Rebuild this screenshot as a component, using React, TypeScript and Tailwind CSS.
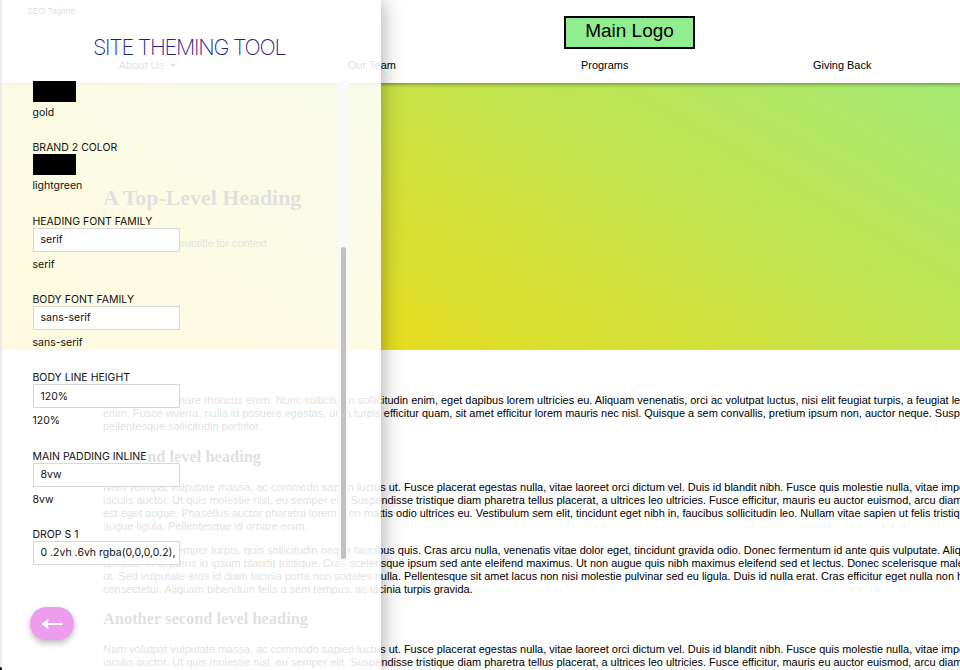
import type { ReactNode } from "react";

const introLines = [
  "Lorem ipsum ornare rhoncus enim. Nunc sollicitudin sollicitudin enim, eget dapibus lorem ultricies eu. Aliquam venenatis, orci ac volutpat luctus, nisi elit feugiat turpis, a feugiat leo",
  "enim. Fusce viverra, nulla id posuere egestas, urna turpis efficitur quam, sit amet efficitur lorem mauris nec nisl. Quisque a sem convallis, pretium ipsum non, auctor neque. Suspendisse",
  "pellentesque sollicitudin porttitor.",
];

const volutpatLines = [
  "Nam volutpat vulputate massa, ac commodo sapien luctus ut. Fusce placerat egestas nulla, vitae laoreet orci dictum vel. Duis id blandit nibh. Fusce quis molestie nulla, vitae imperdiet",
  "iaculis auctor. Ut quis molestie nisl, eu semper elit. Suspendisse tristique diam pharetra tellus placerat, a ultrices leo ultricies. Fusce efficitur, mauris eu auctor euismod, arcu diam",
  "est eget augue. Phasellus auctor pharetra lorem, non mattis odio ultrices eu. Vestibulum sem elit, tincidunt eget nibh in, faucibus sollicitudin leo. Nullam vitae sapien ut felis tristique",
  "augue ligula. Pellentesque id ornare enim.",
];

const semperLines = [
  "Vestibulum at semper turpis, quis sollicitudin neque faucibus quis. Cras arcu nulla, venenatis vitae dolor eget, tincidunt gravida odio. Donec fermentum id ante quis vulputate. Aliquam",
  "tempus. In ut purus in ipsum blandit tristique. Cras scelerisque ipsum sed ante eleifend maximus. Ut non augue quis nibh maximus eleifend sed et lectus. Donec scelerisque malesuada",
  "ut. Sed vulputate eros id diam lacinia porta non sodales nulla. Pellentesque sit amet lacus non nisi molestie pulvinar sed eu ligula. Duis id nulla erat. Cras efficitur eget nulla non hen",
  "consectetur. Aliquam bibendum felis a sem tempus, ac lacinia turpis gravida.",
];

function Paragraph({ lines }: { lines: string[] }) {
  return (
    <p className="whitespace-nowrap text-[10.94px] leading-[12.95px]">
      {lines.map((line) => (
        <span key={line} className="block">
          {line}
        </span>
      ))}
    </p>
  );
}

function SectionHeading({ children }: { children: ReactNode }) {
  return (
    <h2 className="font-['Liberation_Serif',serif] text-[16.4px] font-bold leading-[20px]">{children}</h2>
  );
}

function Field({ label, value, solid }: { label: string; value: string; solid?: boolean }) {
  return (
    <div className="h-[78.3px]">
      <label className={`block w-fit whitespace-nowrap text-[10.5px] leading-[13px] ${solid ? "bg-[#fefefe]" : ""}`}>
        {label}
      </label>
      <div className="flex h-[24px] w-[147.5px] items-center overflow-hidden whitespace-nowrap border border-[#d8d8d8] bg-white pl-[7px] text-[10.5px]">
        {value}
      </div>
      <div className="mt-[6px] text-[10.5px] leading-[13px]">{value}</div>
    </div>
  );
}

function Swatch({ name }: { name: string }) {
  return (
    <>
      <div className="h-[21px] w-[43px] bg-black" />
      <div className="mt-[4px] text-[10.5px] leading-[13px]">{name}</div>
    </>
  );
}

function Site() {
  return (
    <div className="flex h-[670px] w-[1286px] flex-col font-['Liberation_Sans',Arial,sans-serif] text-black">
      <header className="relative z-10 flex h-[82.5px] shrink-0 flex-col bg-[#fefefe] shadow-[0_1px_4px_rgba(0,0,0,0.45)]">
        <div className="flex h-[49px] items-start">
          <span className="ml-[27px] mt-[5px] w-[537px] text-[8.7px] leading-[12px]">SEO Tagline</span>
          <div className="mt-[16px] flex h-[33px] w-[131px] items-center justify-center border-2 border-black bg-[#90ee90] pb-[3px] text-[19px]">
            Main Logo
          </div>
        </div>
        <nav className="mt-[9px] flex pl-[119px] text-[10.94px] leading-[14px]">
          <span className="flex w-[229px] items-center gap-[6px]">
            About Us
            <span className="border-x-[3px] border-t-[3px] border-x-transparent border-t-black" />
          </span>
          <span className="w-[233px]">Our Team</span>
          <span className="w-[232px]">Programs</span>
          <span>Giving Back</span>
        </nav>
      </header>
      <section className="flex h-[267.5px] shrink-0 flex-col bg-[linear-gradient(30deg,#ffd700,#90ee90)] pl-[103px] pt-[102.5px]">
        <h1 className="font-['Liberation_Serif',serif] text-[21.9px] font-bold leading-[26px]">A Top-Level Heading</h1>
        <p className="mt-[26px] text-[10.94px] leading-[13px] tracking-[-0.06px]">And here is our subtitle for context</p>
      </section>
      <main className="grow bg-[#fefefe] pl-[103px] pt-[44px]">
        <Paragraph lines={introLines} />
        <div className="pb-[14px] pt-[14px]">
          <SectionHeading>A second level heading</SectionHeading>
        </div>
        <Paragraph lines={volutpatLines} />
        <div className="h-[11px]" />
        <Paragraph lines={semperLines} />
        <div className="pb-[14px] pt-[14px]">
          <SectionHeading>Another second level heading</SectionHeading>
        </div>
        <Paragraph lines={volutpatLines} />
      </main>
    </div>
  );
}

function ThemingPanel() {
  return (
    <aside className="absolute left-0 top-0 z-20 flex h-[670px] w-[381px] flex-col border-l-2 border-[#ececee] bg-white/88 font-[Inter,sans-serif] text-[#111] shadow-[0_0_20px_rgba(0,0,0,0.36)]">
      <h1 className="h-[81px] whitespace-nowrap pl-[91px] pt-[34px] text-[21.5px] font-extralight leading-[26px] tracking-[-1.25px] text-[#1d2088]">
        SITE THEMING TOOL
      </h1>
      <div className="flex h-[486px] w-[346px] justify-between overflow-hidden pl-[30.5px]">
        <div>
          <Swatch name="gold" />
          <div className="mt-[22px] text-[10.5px] leading-[13px]">BRAND 2 COLOR</div>
          <Swatch name="lightgreen" />
          <div className="mt-[22.9px]">
            <Field label="HEADING FONT FAMILY" value="serif" />
            <Field label="BODY FONT FAMILY" value="sans-serif" />
            <Field label="BODY LINE HEIGHT" value="120%" solid />
            <Field label="MAIN PADDING INLINE" value="8vw" solid />
            <Field label="DROP S 1" value="0 .2vh .6vh rgba(0,0,0,0.2)," solid />
          </div>
        </div>
        <div className="flex w-[10px] justify-center bg-[#f9f9fb] pt-[166px]">
          <div className="h-[312px] w-[5px] rounded-full bg-[#c1c1c1]" />
        </div>
      </div>
      <button className="ml-[28px] mt-[40px] flex h-[33px] w-[44px] items-center justify-center rounded-full bg-[#ee9cee] shadow-[0_3px_6px_rgba(0,0,0,0.28)]">
        <svg width="22" height="12" viewBox="0 0 22 12" fill="none" stroke="white" strokeWidth="2.2" strokeLinecap="round" strokeLinejoin="round">
          <path d="M20.5 6H2" />
          <path d="M7 2L1.5 6L7 10L5.5 6Z" fill="white" strokeWidth="1.4" />
        </svg>
      </button>
    </aside>
  );
}

export default function App() {
  return (
    <div className="relative h-[670px] w-[960px] overflow-hidden bg-white">
      <Site />
      <ThemingPanel />
      <span className="absolute bottom-0 left-0 z-30 h-[3px] w-[2px] rounded-tr-full bg-black" />
    </div>
  );
}
